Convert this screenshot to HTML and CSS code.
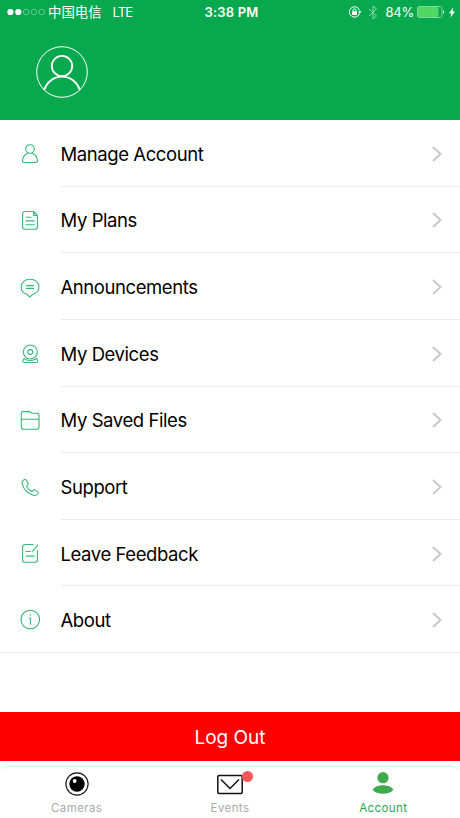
FILE: index.html
```html
<!DOCTYPE html>
<html lang="en">
<head>
    <meta charset="UTF-8">
    <meta name="viewport" content="width=device-width, initial-scale=1.0">
    <title>Account</title>
    <link rel="stylesheet" href="styles.css">
</head>
<body>
    <header class="header">
        <div class="status-bar">
            <div class="status-left">
                <svg class="signal" width="38" height="8" viewBox="0 0 38 8">
                    <circle class="on" cx="3.4" cy="4" r="3.1"/>
                    <circle class="on" cx="11.3" cy="4" r="3.1"/>
                    <circle cx="19.1" cy="4" r="2.8"/>
                    <circle cx="26.9" cy="4" r="2.8"/>
                    <circle cx="34.7" cy="4" r="2.8"/>
                </svg>
                <span class="carrier">中国电信</span>
                <span class="network">LTE</span>
            </div>
            <div class="time">3:38 PM</div>
            <div class="status-right">
                <svg class="lock" width="14" height="12" viewBox="0 0 14 12">
                    <path d="M11.6 7.2A5.2 5.2 0 1 1 11.5 4.3" fill="none" stroke="#fff"/>
                    <path d="M9.8 5.2h3.8l-1.9 2.4z" fill="#fff"/>
                    <rect x="4" y="5.3" width="5" height="3.7" rx=".4" fill="#fff"/>
                    <path d="M5 5.5V4.4a1.5 1.5 0 0 1 3 0v1.1" fill="none" stroke="#fff"/>
                </svg>
                <svg class="bluetooth" width="10" height="15" viewBox="0 0 10 15">
                    <path d="M1 4l7.5 7L5 14V1l3.5 3L1 11"/>
                </svg>
                <span class="percent">84%</span>
                <svg class="battery" width="28" height="12" viewBox="0 0 28 12">
                    <rect x=".5" y=".5" width="24.4" height="11" rx="1.2" fill="none" stroke="#7fd3a0"/>
                    <rect x="1" y="1" width="20.4" height="10" fill="#4fd964"/>
                    <path d="M26 4q2.4 2 0 4z" fill="#fff"/>
                </svg>
                <svg class="bolt" width="6" height="11" viewBox="0 0 6 11">
                    <path d="M4.4.2L0 6.2h2.4L1.4 10.8 6 4.5H3.5z" fill="#fff"/>
                </svg>
            </div>
        </div>
        <svg class="avatar" width="52" height="52" viewBox="0 0 52 52">
            <circle cx="26" cy="26" r="25.3" stroke-width="1"/>
            <circle cx="26" cy="20" r="10.2" stroke-width="1.8"/>
            <path d="M8.2 43.8C11 35.8 17.8 30.6 26 30.6s15 5.2 17.8 13.2" stroke-width="1.8"/>
        </svg>
    </header>

    <main class="menu">
        <a class="menu-item">
            <svg class="icon" viewBox="0 0 24 24"><circle cx="12" cy="7" r="4.3"/><path d="M9.8 11.2C6.8 12.6 4.5 15.6 4.5 18.8q0 1.7 1.7 1.7h11.6q1.7 0 1.7-1.7c0-3.2-2.3-6.2-5.3-7.6"/></svg>
            <div class="menu-row"><span>Manage Account</span><svg class="chevron" viewBox="0 0 10 16"><path d="M1 1l7.5 7L1 15"/></svg></div>
        </a>
        <a class="menu-item">
            <svg class="icon" viewBox="0 0 24 24"><path d="M15.6 2.500H7.200Q4.600 2.500 4.600 5.100v12.600q0 2.600 2.600 2.600h9.600q2.600 0 2.600-2.600V6.500zM15.600 2.500v4h3.800M8.400 8.300H13M8 11.900h8.200M8 15.700h8.200"/></svg>
            <div class="menu-row"><span>My Plans</span><svg class="chevron" viewBox="0 0 10 16"><path d="M1 1l7.5 7L1 15"/></svg></div>
        </a>
        <a class="menu-item">
            <svg class="icon" viewBox="0 0 24 24"><path d="M8.8 18.2C5.5 17.2 3.2 14.4 3.2 11 3.2 6.6 7 3.2 12 3.2s9 3.4 9 7.8c0 3.6-2.8 6.4-6 7.2L11.7 21zM8.4 9.6h7.2M8.4 12.4h7.2"/></svg>
            <div class="menu-row"><span>Announcements</span><svg class="chevron" viewBox="0 0 10 16"><path d="M1 1l7.5 7L1 15"/></svg></div>
        </a>
        <a class="menu-item">
            <svg class="icon" viewBox="0 0 24 24"><circle cx="12.3" cy="10" r="7"/><circle cx="12.3" cy="10" r="2.4"/><path d="M6.6 16.6c-2.2.9-2.4 3.9-.4 3.9h12.2c2 0 1.8-3-.4-3.9M7.2 17.2q5 2.6 10.2 0"/></svg>
            <div class="menu-row"><span>My Devices</span><svg class="chevron" viewBox="0 0 10 16"><path d="M1 1l7.5 7L1 15"/></svg></div>
        </a>
        <a class="menu-item">
            <svg class="icon" viewBox="0 0 24 24"><path d="M3.3 4.200q0-1.600 1.600-1.600h6.400q.9 0 1.400.8t1.500.8h4.900q1.900 0 1.900 1.900v12q0 2.100-2.100 2.100H5.600q-2.300 0-2.300-2.300zM3.300 10.200H21"/></svg>
            <div class="menu-row"><span>My Saved Files</span><svg class="chevron" viewBox="0 0 10 16"><path d="M1 1l7.5 7L1 15"/></svg></div>
        </a>
        <a class="menu-item">
            <svg class="icon" viewBox="0 0 24 24"><path d="M5.3 4.2c1-.9 2-1.1 2.7-.2l2 2.9c.6.9.2 1.7-.8 2.500-.6.5-.6 1-.2 1.700 1 1.700 2.600 3.200 4.200 4.100.8.4 1.300.3 1.800-.4.7-1 1.400-1.200 2.300-.7l2.400 1.500c.9.6.9 1.400.1 2.400-1.200 1.400-2.600 1.800-4.500 1.200C9.800 17.500 6 13.600 4.200 8.100c-.5-1.600 0-3 1.100-3.900z"/></svg>
            <div class="menu-row"><span>Support</span><svg class="chevron" viewBox="0 0 10 16"><path d="M1 1l7.5 7L1 15"/></svg></div>
        </a>
        <a class="menu-item">
            <svg class="icon" viewBox="0 0 24 24"><path d="M15.2 2.500h-8Q4.600 2.500 4.600 5.100v12.600q0 2.600 2.600 2.600h9.600q2.600 0 2.600-2.600V8.500M19.800 3.200l-5.200 6M8 9.500h4.400M8.400 14.100h7.800"/></svg>
            <div class="menu-row"><span>Leave Feedback</span><svg class="chevron" viewBox="0 0 10 16"><path d="M1 1l7.5 7L1 15"/></svg></div>
        </a>
        <a class="menu-item last">
            <svg class="icon" viewBox="0 0 24 24"><circle cx="12.3" cy="11.500" r="9.300"/><path d="M12.500 10v6.200M11.600 10h.9M12.500 6.900v.4"/></svg>
            <div class="menu-row"><span>About</span><svg class="chevron" viewBox="0 0 10 16"><path d="M1 1l7.5 7L1 15"/></svg></div>
        </a>
    </main>

    <button class="logout">Log Out</button>

    <nav class="tab-bar">
        <a class="tab">
            <svg width="26" height="26" viewBox="0 0 26 26">
                <circle cx="13" cy="13" r="11.1" fill="none" stroke="#111" stroke-width="1.1"/>
                <circle cx="13" cy="13" r="7.7" fill="#000"/>
                <circle cx="10.7" cy="10" r="1.9" fill="#fff"/>
            </svg>
            <span>Cameras</span>
        </a>
        <a class="tab">
            <div class="mail">
                <svg width="26" height="26" viewBox="0 0 26 26" fill="none" stroke="#111" stroke-width="1.5">
                    <rect x=".8" y="4.5" width="24.4" height="18" rx="1.2"/>
                    <path d="M4 8.5l9 9 9-9"/>
                </svg>
                <i class="badge"></i>
            </div>
            <span>Events</span>
        </a>
        <a class="tab active">
            <svg width="26" height="26" viewBox="0 0 26 26" fill="#3fab4b">
                <circle cx="13" cy="6.7" r="5.6"/>
                <path d="M2.500 18.500C6.500 12.800 19.500 12.800 23.500 18.500 19.500 24.300 6.500 24.300 2.500 18.500z"/>
            </svg>
            <span>Account</span>
        </a>
    </nav>
</body>
</html>
```
FILE: styles.css
```css
* {
    box-sizing: border-box;
}

body {
    margin: 0;
    width: 460px;
    height: 818px;
    display: flex;
    flex-direction: column;
    overflow: hidden;
    background: #fff;
    color: #000;
    font-family: Inter, "Noto Sans CJK SC", sans-serif;
}

.header {
    height: 120px;
    flex: none;
    background: #08a84f;
    color: #fff;
}

.status-bar {
    height: 24px;
    display: grid;
    grid-template-columns: 1fr auto 1fr;
    align-items: center;
    padding: 0 5px 0 7px;
    font-size: 13px;
    line-height: 24px;
}

.status-left,
.status-right {
    display: flex;
    align-items: center;
}

.status-right {
    justify-content: flex-end;
}

.signal {
    fill: none;
    stroke: #8fd8ad;
    stroke-width: 0.7;
}

.signal .on {
    fill: #fff;
    stroke: none;
}

.carrier {
    margin-left: 3px;
    font-size: 13.4px;
}

.network {
    margin-left: 11px;
    font-size: 13px;
    letter-spacing: -0.9px;
}

.time {
    padding-left: 1px;
    font-weight: 600;
    letter-spacing: 0.2px;
}

.percent {
    letter-spacing: -0.2px;
}

.bluetooth {
    margin: 0 7px 0 6px;
    fill: none;
    stroke: #8fdbae;
    stroke-width: 1;
}

.battery {
    margin: 0 4px 0 3px;
}

.avatar {
    display: block;
    margin: 22px 0 0 36px;
    fill: none;
    stroke: #fff;
}

.menu {
    flex: none;
}

.menu-item {
    display: flex;
    align-items: center;
    height: 66.65px;
    padding-left: 18px;
}

.icon {
    width: 24px;
    height: 24px;
    flex: none;
    margin-top: 2px;
    fill: none;
    stroke: #35b878;
    stroke-width: 1.1;
    stroke-linejoin: round;
    stroke-linecap: round;
}

.menu-row {
    flex: 1;
    height: 100%;
    display: flex;
    align-items: center;
    justify-content: space-between;
    margin-left: 18.5px;
    padding: 2px 18px 0 0;
    border-bottom: 1px solid #ececec;
    font-size: 18.5px;
    letter-spacing: -0.42px;
}

.last {
    border-bottom: 1px solid #ececec;
}

.last .menu-row {
    border-bottom: none;
}

.chevron {
    width: 10px;
    height: 16px;
    fill: none;
    stroke: #c9c9c9;
    stroke-width: 2;
}

.logout {
    height: 49px;
    flex: none;
    margin-top: auto;
    padding: 1px 0 0;
    border: none;
    background: #fe0000;
    color: #fff;
    font-family: inherit;
    font-size: 19px;
}

.tab-bar {
    height: 53px;
    flex: none;
    margin-top: 4px;
    display: flex;
    border-top: 2px solid #ededf2;
    border-radius: 10px 10px 0 0;
}

.tab {
    flex: 1;
    display: flex;
    flex-direction: column;
    align-items: center;
    padding-top: 4px;
    color: #aaa;
    font-size: 11.5px;
    letter-spacing: 0.4px;
}

.tab span {
    margin-top: 3px;
    line-height: 16px;
}

.tab.active {
    color: #1fa651;
}

.mail {
    position: relative;
    height: 26px;
}

.badge {
    position: absolute;
    top: 0;
    right: -10px;
    width: 11px;
    height: 11px;
    border-radius: 50%;
    background: #ff5558;
}
```
